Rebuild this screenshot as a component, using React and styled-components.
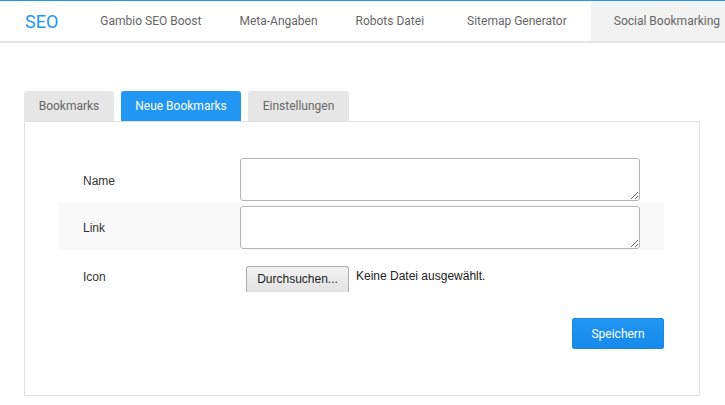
import React, { useState } from 'react';
import styled, { createGlobalStyle } from 'styled-components';

const GlobalStyle = createGlobalStyle`
  html, body {
    margin: 0;
    padding: 0;
    background: #ffffff;
    font-family: Roboto, "Liberation Sans", sans-serif;
  }
`;

const TopBar = styled.div`
  display: flex;
  align-items: stretch;
  height: 40px;
  border-top: 1px solid #2196f3;
  border-bottom: 2px solid #e5e5e5;
`;

const Brand = styled.div`
  display: flex;
  align-items: center;
  padding: 0 23px 0 25px;
  font-size: 18px;
  color: #2196f3;
`;

const NavItem = styled.div`
  display: flex;
  align-items: center;
  padding: 0 ${({ $pad }) => $pad || 19}px;
  font-size: 12px;
  color: #666666;
  white-space: nowrap;
  background: ${({ $active }) => ($active ? '#f2f2f2' : 'transparent')};
  flex: ${({ $active }) => ($active ? '1' : 'none')};
`;

const Content = styled.div`
  padding: 48px 25px 0 24px;
`;

const TabRow = styled.div`
  display: flex;
  gap: 7px;
`;

const Tab = styled.div`
  width: ${({ $width }) => $width}px;
  height: 30px;
  display: flex;
  align-items: center;
  justify-content: center;
  font-size: 12px;
  border-radius: 3px 3px 0 0;
  background: ${({ $active }) => ($active ? '#2196f3' : '#e6e6e6')};
  color: ${({ $active }) => ($active ? '#ffffff' : '#666666')};
  cursor: pointer;
`;

const Panel = styled.div`
  border: 1px solid #e0e0e0;
  height: 275px;
  padding: 34px 35px 0 34px;
  box-sizing: border-box;
`;

const FormRow = styled.div`
  display: flex;
  align-items: center;
  height: ${({ $height }) => $height || 47}px;
  padding: 0 24px;
  background: ${({ $shaded }) => ($shaded ? '#f9f9f9' : 'transparent')};
`;

const Label = styled.div`
  width: 157px;
  padding-top: 2px;
  font-family: "Liberation Sans", Arial, sans-serif;
  font-size: 12px;
  color: #333333;
`;

const TextArea = styled.textarea`
  width: 400px;
  height: 43px;
  box-sizing: border-box;
  border: 1px solid #b5b5b5;
  border-radius: 3px;
  font-family: "Liberation Sans", Arial, sans-serif;
  font-size: 12px;
  padding: 4px;
  margin: ${({ $offset }) => $offset || 0}px 0 0;
`;

const FileField = styled.div`
  display: flex;
  align-items: center;
  gap: 7px;
  padding-left: 6px;
  font-family: "Liberation Sans", Arial, sans-serif;
  font-size: 12px;
  color: #222222;
`;

const FileButton = styled.button`
  height: 26px;
  width: 103px;
  border: 1px solid #adadad;
  border-bottom: none;
  border-radius: 3px 3px 0 0;
  background: linear-gradient(#f2f2f2, #e2e2e2);
  font-family: "Liberation Sans", Arial, sans-serif;
  font-size: 12px;
  color: #222222;
  padding: 0;
  margin-top: 5px;
`;

const Actions = styled.div`
  display: flex;
  justify-content: flex-end;
  padding-top: 16px;
`;

const SaveButton = styled.button`
  width: 92px;
  height: 31px;
  border: 1px solid #1a88e0;
  border-radius: 2px;
  background: linear-gradient(#2196f3, #1689ea);
  color: #ffffff;
  font-family: Roboto, "Liberation Sans", sans-serif;
  font-size: 12px;
  cursor: pointer;
`;

const navItems = [
  { label: 'Gambio SEO Boost', pad: 19 },
  { label: 'Meta-Angaben', pad: 19 },
  { label: 'Robots Datei', pad: 19 },
  { label: 'Sitemap Generator', pad: 24 },
];

const tabs = [
  { label: 'Bookmarks', width: 90 },
  { label: 'Neue Bookmarks', width: 120 },
  { label: 'Einstellungen', width: 101 },
];

export default function App() {
  const [activeTab, setActiveTab] = useState('Neue Bookmarks');

  return (
    <>
      <GlobalStyle />
      <TopBar>
        <Brand>SEO</Brand>
        {navItems.map((item) => (
          <NavItem key={item.label} $pad={item.pad}>{item.label}</NavItem>
        ))}
        <NavItem $active $pad={23}>Social Bookmarking</NavItem>
      </TopBar>
      <Content>
        <TabRow>
          {tabs.map((t) => (
            <Tab
              key={t.label}
              $width={t.width}
              $active={activeTab === t.label}
              onClick={() => setActiveTab(t.label)}
            >
              {t.label}
            </Tab>
          ))}
        </TabRow>
        <Panel>
          <FormRow>
            <Label>Name</Label>
            <TextArea />
          </FormRow>
          <FormRow $shaded>
            <Label>Link</Label>
            <TextArea $offset={2} />
          </FormRow>
          <FormRow $height={52}>
            <Label>Icon</Label>
            <FileField>
              <FileButton>Durchsuchen...</FileButton>
              <span>Keine Datei ausgewählt.</span>
            </FileField>
          </FormRow>
          <Actions>
            <SaveButton>Speichern</SaveButton>
          </Actions>
        </Panel>
      </Content>
    </>
  );
}
